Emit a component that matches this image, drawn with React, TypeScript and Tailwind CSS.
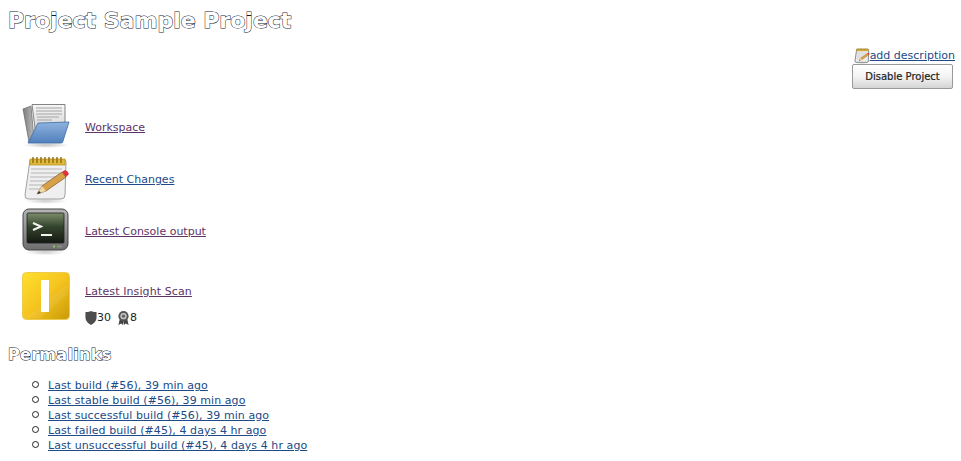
import React from "react";

const FONT = "font-['DejaVu_Sans',sans-serif]";

function FolderIcon() {
  return (
    <svg width="52" height="48" viewBox="0 0 52 48">
      <defs>
        <linearGradient id="fb" x1="0" y1="0" x2="0" y2="1">
          <stop offset="0" stopColor="#8fb3de" />
          <stop offset="1" stopColor="#5180bd" />
        </linearGradient>
        <linearGradient id="fbk" x1="0" y1="0" x2="1" y2="0">
          <stop offset="0" stopColor="#7c7c7c" />
          <stop offset="1" stopColor="#bdbdbd" />
        </linearGradient>
        <linearGradient id="fp" x1="0" y1="0" x2="0" y2="1">
          <stop offset="0" stopColor="#f6f6f6" />
          <stop offset="1" stopColor="#cfcfcf" />
        </linearGradient>
        <radialGradient id="fs">
          <stop offset="0" stopColor="#999" stopOpacity=".6" />
          <stop offset="1" stopColor="#999" stopOpacity="0" />
        </radialGradient>
      </defs>
      <ellipse cx="24" cy="41" rx="23" ry="3" fill="url(#fs)" />
      <path d="M1 5 L9 2 L12 35 L7 38 Z" fill="url(#fbk)" stroke="#666" strokeWidth=".7" />
      <path d="M10 0.5 H43 L43 20 L14 32 Z" fill="url(#fp)" stroke="#666" strokeWidth=".8" />
      <path d="M14 4 H40 M14 7 H40 M14 10 H40 M15 13 H37 M15 16 H30" stroke="#a3a3a3" strokeWidth="1" />
      <path d="M16 19 L47 18 L41 37 Q41 39 39 39 L6 39 Z" fill="url(#fb)" stroke="#3c6aa5" strokeWidth=".8" strokeLinejoin="round" />
    </svg>
  );
}

function NotepadIcon({ size = 48 }: { size?: number }) {
  const rings = [12, 16, 20, 24, 28, 32, 36, 40];
  return (
    <svg width={size} height={size} viewBox="0 0 48 48">
      <defs>
        <radialGradient id={`ns${size}`}>
          <stop offset="0" stopColor="#999" stopOpacity=".5" />
          <stop offset="1" stopColor="#999" stopOpacity="0" />
        </radialGradient>
      </defs>
      <ellipse cx="24" cy="45" rx="21" ry="3" fill={`url(#ns${size})`} />
      <path d="M8 4 H43 Q44 4 44 6 L43 39 Q43 43 39 43 L6 43 Q3 43 3 39 Z" fill="#efefef" stroke="#8a8a8a" strokeWidth={size < 20 ? 3 : 0.8} />
      <rect x="8" y="3" width="35" height="6" fill="#e2b93a" stroke="#a98316" strokeWidth=".6" />
      {rings.map((x) => (
        <path key={x} d={`M${x - 1} 1 V7`} stroke="#8a6a12" strokeWidth="1.4" />
      ))}
      <path d="M9 13 H40 M9 17 H38 M8 21 H36 M8 25 H30 M7 29 H24 M7 33 H20" stroke="#b5b5b5" strokeWidth="1" />
      <path d="M15 38 L20 30 L40 16 L44 21 L24 35 Z" fill="#d9a04a" stroke="#7a5420" strokeWidth=".7" />
      <path d="M15 38 L20 30 L24 35 Z" fill="#f1d7a8" />
      <path d="M15 38 L17 35 L19 37 Z" fill="#333" />
      <path d="M40 16 L43 14 Q46 15 47 18 L44 21 Z" fill="#d8343a" />
    </svg>
  );
}

function TerminalIcon() {
  return (
    <svg width="48" height="48" viewBox="0 0 48 48">
      <defs>
        <linearGradient id="tb" x1="0" y1="0" x2="0" y2="1">
          <stop offset="0" stopColor="#b5b5b5" />
          <stop offset="1" stopColor="#6e6e6e" />
        </linearGradient>
        <linearGradient id="ts" x1="0" y1="0" x2="0" y2="1">
          <stop offset="0" stopColor="#7c8c6c" />
          <stop offset=".45" stopColor="#34452e" />
          <stop offset="1" stopColor="#141a12" />
        </linearGradient>
        <radialGradient id="tsh">
          <stop offset="0" stopColor="#999" stopOpacity=".5" />
          <stop offset="1" stopColor="#999" stopOpacity="0" />
        </radialGradient>
      </defs>
      <ellipse cx="23" cy="44" rx="20" ry="3.5" fill="url(#tsh)" />
      <rect x="1" y="1" width="45" height="41" rx="6" fill="url(#tb)" stroke="#444" strokeWidth="1" />
      <rect x="5" y="5" width="37" height="30" rx="1" fill="url(#ts)" stroke="#222" strokeWidth=".8" />
      <path d="M11 15 L19 18.5 L11 22" fill="none" stroke="#f2f2f2" strokeWidth="2" />
      <path d="M19 27 H30" stroke="#f2f2f2" strokeWidth="2" />
      <rect x="31" y="37.5" width="2" height="2" fill="#7fd14c" />
      <rect x="35" y="37.5" width="5" height="2" fill="#8c8c8c" />
    </svg>
  );
}

function InsightIcon() {
  return (
    <svg width="48" height="48" viewBox="0 0 48 48">
      <defs>
        <linearGradient id="ig" x1="0" y1="0" x2="1" y2="1">
          <stop offset="0" stopColor="#ffe02e" />
          <stop offset=".5" stopColor="#f5c41f" />
          <stop offset="1" stopColor="#c99a08" />
        </linearGradient>
      </defs>
      <rect x="0.5" y="0.5" width="47" height="47" rx="4" fill="url(#ig)" stroke="#eecb4a" />
      <path d="M3 46 L46 12 V22 L18 46 Z" fill="#fff" opacity=".07" />
      <rect x="19" y="8" width="8" height="32" fill="#fff" />
    </svg>
  );
}

function ShieldIcon() {
  return (
    <svg width="12" height="16" viewBox="0 0 13 16" className="shrink-0">
      <path d="M0.5 1.5 Q4 2 6.5 0.5 Q9 2 12.5 1.5 V8 Q12 13 6.5 15.5 Q1 13 0.5 8 Z" fill="#4d4d4d" />
    </svg>
  );
}

function RibbonIcon() {
  return (
    <svg width="13" height="16" viewBox="0 0 14 16" className="shrink-0">
      <path d="M3 9 L1.5 15.5 L4.5 14 L6.5 15.5 L7 11 L7.5 15.5 L9.5 14 L12.5 15.5 L11 9 Z" fill="#444" />
      <circle cx="7" cy="6" r="5.5" fill="#555" />
      <circle cx="7" cy="6" r="3.4" fill="#c4c4c4" />
      <circle cx="7" cy="6" r="1.8" fill="#666" />
    </svg>
  );
}

const HEAD_STROKE = "font-bold text-white [-webkit-text-stroke:1px_#0b1a33] [paint-order:stroke_fill]";

function Task({ icon, label, visited, children, tall }: { icon: React.ReactNode; label: string; visited?: boolean; children?: React.ReactNode; tall?: boolean }) {
  return (
    <div className={`flex items-start ${tall ? "h-[70px]" : "h-[52px]"}`}>
      <div className={`w-[63px] shrink-0 ${tall ? "pt-[6px]" : "pt-[5px]"}`}>{icon}</div>
      <div className={tall ? "pt-[12px]" : "pt-[15px]"}>
        <a href="#" className={`text-[11px] leading-[18px] underline ${tall ? "tracking-[0.1px]" : ""} ${visited ? "text-[#5c3566]" : "text-[#204A87]"}`}>{label}</a>
        {children}
      </div>
    </div>
  );
}

export default function App() {
  const links = [
    "Last build (#56), 39 min ago",
    "Last stable build (#56), 39 min ago",
    "Last successful build (#56), 39 min ago",
    "Last failed build (#45), 4 days 4 hr ago",
    "Last unsuccessful build (#45), 4 days 4 hr ago",
  ];
  return (
    <div className={`w-[961px] h-[461px] overflow-hidden bg-white text-[#222] ${FONT}`}>
      <div className="pl-2 pr-[6px]">
        <h1 className={`text-[22px] leading-[24px] pt-[9px] ${HEAD_STROKE}`}>Project Sample Project</h1>
        <div className="flex flex-col items-end mt-[15px]">
          <div className="flex items-start h-[16px]">
            <NotepadIcon size={16} />
            <a href="#" className="text-[11px] leading-[14px] mt-[1px] underline text-[#204A87]">add description</a>
          </div>
          <button className="w-[101px] h-[25px] mr-[2px] rounded-[2px] border border-[#999] bg-gradient-to-b from-white via-[#f4f4f4] to-[#d4d4d4] text-[10px] text-[#222] [-webkit-text-stroke:0.2px_#222]">Disable Project</button>
        </div>
        <div className="pl-[14px] mt-[10px]">
          <Task icon={<FolderIcon />} label="Workspace" visited />
          <Task icon={<NotepadIcon />} label="Recent Changes" />
          <Task icon={<TerminalIcon />} label="Latest Console output" visited />
          <div className="h-[11px]" />
          <Task icon={<InsightIcon />} label="Latest Insight Scan" visited tall>
            <div className="flex items-center gap-[6px] mt-[8px] text-[11px] leading-[16px]">
              <span className="flex items-center"><ShieldIcon />30</span>
              <span className="flex items-center"><RibbonIcon />8</span>
            </div>
          </Task>
        </div>
        <h2 className={`text-[16px] leading-[20px] mt-[9px] tracking-[0.3px] ${HEAD_STROKE}`}>Permalinks</h2>
        <ul className="mt-[13px] pl-[24px]">
          {links.map((l) => (
            <li key={l} className="flex items-center h-[15px]">
              <span className="w-[7px] h-[7px] rounded-full border border-[#222] shrink-0 mr-[9px] -mt-[3px]" />
              <a href="#" className="text-[11px] leading-[15px] underline tracking-[0.07px] text-[#204A87]">{l}</a>
            </li>
          ))}
        </ul>
      </div>
    </div>
  );
}
